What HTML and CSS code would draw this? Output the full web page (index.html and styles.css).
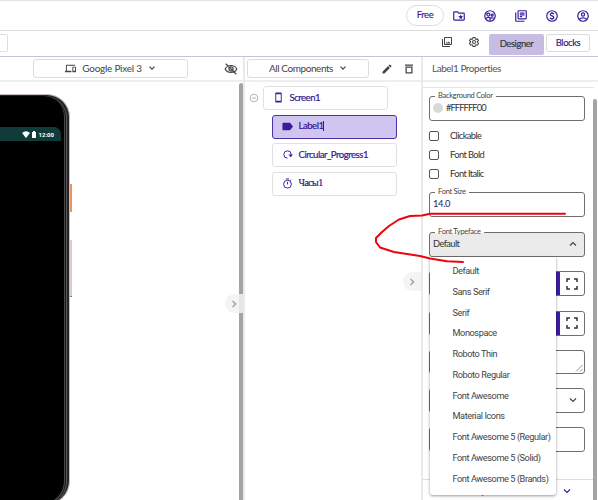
FILE: index.html
```html
<!DOCTYPE html>
<html lang="en">
<head>
<meta charset="utf-8">
<title>Designer</title>
<link rel="stylesheet" href="styles.css">
</head>
<body>
<div class="app">
<header class="topbar">
  <span class="plan">Free</span>
  <svg class="ic" viewBox="0 0 24 24"><path d="M20 6h-8l-2-2H4c-1.100 0-2 .9-2 2v12c0 1.100.9 2 2 2h16c1.100 0 2-.9 2-2V8c0-1.100-.9-2-2-2zm0 12H4V6h5.170l2 2H20v10z"/><path d="M15 9.500l1.200 2.700 2.900.3-2.200 1.900.6 2.900-2.500-1.500-2.500 1.500.6-2.900-2.200-1.900 2.900-.3z"/></svg>
  <svg class="ic" viewBox="0 0 24 24"><circle cx="12" cy="12" r="9" class="ln"/><circle cx="9.200" cy="9.500" r="2.600" class="ln"/><circle cx="15.700" cy="10.500" r="1.700" class="ln"/><path class="ln" d="M4.500 17c2-2.500 5-2.800 7.500-2v6M12 17c1-2 4.500-2.500 6.500-1"/></svg>
  <svg class="ic" viewBox="0 0 24 24"><path d="M4 6H2v14c0 1.100.9 2 2 2h14v-2H4V6zm16-4H8c-1.100 0-2 .9-2 2v12c0 1.100.9 2 2 2h12c1.100 0 2-.9 2-2V4c0-1.100-.9-2-2-2zm0 14H8V4h12v12zM10 9h8v2h-8zm0 3h4v2h-4zm0-6h8v2h-8z"/></svg>
  <svg class="ic" viewBox="0 0 24 24"><circle cx="12" cy="12" r="9" class="ln"/><path class="ln" d="M15 9c-.5-1.400-1.600-1.800-3-1.800-1.600 0-2.900.8-2.900 2.200 0 3.300 6 1.700 6 5 0 1.600-1.400 2.400-3.100 2.400s-3-.7-3.300-2.200M12 5v2.500m0 9V19"/></svg>
  <svg class="ic" viewBox="0 0 24 24"><circle cx="12" cy="12" r="9" class="ln"/><circle cx="12" cy="9.500" r="2.700" class="ln"/><path class="ln" d="M5.500 18c3.500-3.500 9.500-3.500 13 0"/></svg>
</header>
<nav class="modebar">
  <span class="stub"></span>
  <span class="grow"></span>
  <svg class="ic dark sm gallery" viewBox="0 0 24 24"><path d="M20 4v12H8V4h12m0-2H8c-1.100 0-2 .9-2 2v12c0 1.100.9 2 2 2h12c1.100 0 2-.9 2-2V4c0-1.100-.9-2-2-2zm-8.500 9.670l1.690 2.260 2.480-3.100L19 15H9zM2 6v14c0 1.100.9 2 2 2h14v-2H4V6H2z"/></svg>
  <svg class="ic dark sm gear" viewBox="0 0 24 24"><path class="ln" d="M10 3h4l.6 2.700 1.700 1 2.700-.9 2 3.500-2.100 1.800v1.900l2.100 1.800-2 3.500-2.700-.9-1.700 1L14 21h-4l-.6-2.600-1.700-1-2.700.9-2-3.500L5.100 13v-1.900L3 9.300l2-3.500 2.700.9 1.700-1z"/><circle class="ln" cx="12" cy="12" r="3"/></svg>
  <span class="tab on">Designer</span>
  <span class="tab">Blocks</span>
</nav>
<main class="cols">
  <section class="viewer">
    <div class="tools">
      <div class="picker device"><svg class="ic dark mini" viewBox="0 0 24 24"><path d="M4 6h18V4H4c-1.100 0-2 .9-2 2v11H0v3h14v-3H4V6zm19 2h-6c-.55 0-1 .45-1 1v10c0 .55.450 1 1 1h6c.55 0 1-.45 1-1V9c0-.55-.45-1-1-1zm-1 9h-4v-7h4v7z"/></svg><span class="t-device">Google Pixel 3</span><svg class="chev dark" viewBox="0 0 8 8"><path d="M1.500 2.700L4 5.200l2.500-2.500"/></svg></div>
      <svg class="ic dark eye" viewBox="0 0 24 24"><path class="ln" d="M2 12c4-8 16-8 20 0-4 8-16 8-20 0zM3 3l18 18"/><circle class="ln" cx="12" cy="12" r="3.500"/></svg>
    </div>
    <div class="stage">
      <div class="phone"><div class="screen"><div class="status">
        <svg class="wifi" viewBox="0 0 8 7"><path d="M0 2Q4-1.500 8 2L4 7z"/></svg><svg class="batt" viewBox="0 0 4 7"><path d="M0 1h1V0h2v1h1v6H0z"/></svg><span>12:00</span>
      </div></div></div>
      <i class="key power"></i><i class="key volume"></i>
      <i class="bar"></i>
      <span class="pull"><svg class="chev" viewBox="0 0 8 8"><path d="M2.500 1L5.700 4 2.500 7"/></svg></span>
    </div>
  </section>
  <section class="tree">
    <div class="tools">
      <div class="picker all"><span class="t-all">All Components</span><svg class="chev dark" viewBox="0 0 8 8"><path d="M1.500 2.700L4 5.200l2.500-2.500"/></svg></div>
      <svg class="ic dark sm pen" viewBox="0 0 24 24"><path d="M3 17.250V21h3.750L17.810 9.940l-3.750-3.750zM20.710 7.040c.39-.39.390-1.020 0-1.410l-2.340-2.340c-.39-.39-1.020-.39-1.410 0l-1.830 1.830 3.750 3.750z"/></svg>
      <svg class="ic dark sm" viewBox="0 0 24 24"><path fill-rule="evenodd" d="M4 3h16v2.500H4zM5 7h14v14H5zm2.500 2.500v9h9v-9z"/></svg>
    </div>
    <div class="nodes">
      <div class="rootrow"><svg class="fold" viewBox="0 0 10 10"><circle cx="5" cy="5" r="3.800"/><path d="M3 5h4"/></svg>
      <div class="node"><svg class="ic mini" viewBox="0 0 24 24"><path d="M17 1H7c-1.100 0-2 .9-2 2v18c0 1.100.9 2 2 2h10c1.100 0 2-.9 2-2V3c0-1.100-.9-2-2-2zm0 18H7V5h10z"/></svg><span class="t-screen">Screen1</span></div></div>
      <div class="node kid sel"><svg class="ic mini" viewBox="0 0 24 24"><path d="M16.500 4H3C1.500 4 1 5 1 6v12c0 1 .5 2 2 2h13.500c.8 0 1.500-.4 2-1L24 12l-5.500-7c-.5-.6-1.200-1-2-1z"/></svg><span class="t-label">Label1</span><i class="caret"></i></div>
      <div class="node kid"><svg class="ic mini" viewBox="0 0 24 24"><path class="ln" d="M12 20A8 8 0 1 1 20 12v2"/><path d="M14 12h10l-5 6z"/></svg><span class="t-circ">Circular_Progress1</span></div>
      <div class="node kid"><svg class="ic mini" viewBox="0 0 24 24"><circle class="ln" cx="12" cy="13.500" r="8.500"/><path class="ln" d="M8.500 2h7M12 8.500V14m6-8l2-2"/></svg><span class="cyr">Часы1</span></div>
    </div>
    <span class="pull"><svg class="chev" viewBox="0 0 8 8"><path d="M2.500 1L5.700 4 2.500 7"/></svg></span>
  </section>
  <section class="props">
    <div class="tools title"><span class="t-title">Label1 Properties</span></div>
    <div class="form">
      <div class="field first"><span class="cap t-bg">Background Color</span><i class="swatch"></i><span class="t-hex">#FFFFFF00</span></div>
      <div class="checks">
        <div><i></i><span class="t-click">Clickable</span></div>
        <div><i></i><span class="t-bold">Font Bold</span></div>
        <div><i></i><span class="t-italic">Font Italic</span></div>
      </div>
      <div class="field"><span class="cap t-size">Font Size</span><span class="navy">14.0</span></div>
      <div class="field open"><span class="cap t-face">Font Typeface</span><span class="t-def">Default</span><svg class="chev dark" viewBox="0 0 8 8"><path d="M1 5.500l3-3 3 3"/></svg></div>
      <div class="field dim"><i class="block"></i><svg class="full" viewBox="0 0 12 12"><path d="M1 4V1h3M8 1h3v3M11 8v3H8M4 11H1V8"/></svg></div>
      <div class="field dim"><i class="block"></i><svg class="full" viewBox="0 0 12 12"><path d="M1 4V1h3M8 1h3v3M11 8v3H8M4 11H1V8"/></svg></div>
      <div class="field area"><svg class="grip" viewBox="0 0 8 8"><path d="M1 7.500L7.500 1M5 7.500L7.500 5"/></svg></div>
      <div class="field"><svg class="chev dark" viewBox="0 0 8 8"><path d="M1 2.500l3 3 3-3"/></svg></div>
      <div class="field"></div>
      <div class="group"><span>Advanced Properties</span><svg class="chev" viewBox="0 0 8 8"><path d="M1 2.500l3 3 3-3"/></svg></div>
    </div>
    <i class="bar"></i>
    <ul class="menu">
      <li>Default</li><li>Sans Serif</li><li>Serif</li><li>Monospace</li><li>Roboto Thin</li><li>Roboto Regular</li><li>Font Awesome</li><li>Material Icons</li><li>Font Awesome 5 (Regular)</li><li>Font Awesome 5 (Solid)</li><li>Font Awesome 5 (Brands)</li>
    </ul>
  </section>
</main>
<svg class="scribble" viewBox="0 0 598 500"><path d="M565 213.800H430L422 215.500 410 216 399 219.500 389 226 382 232 376 238 376 242 380 247.500 394 252 420 256 430 258.500 447 261.300 463 262"/></svg>
</div>
</body>
</html>
```

FILE: styles.css
```css
* { box-sizing: border-box; }
body { margin: 0; font: 10px/14px Lato, "Liberation Sans", sans-serif; color: #333; background: #fff; }
.app { position: relative; width: 598px; height: 500px; overflow: hidden; display: flex; flex-direction: column; }
svg { display: block; flex: none; }
i { display: block; flex: none; }
span { white-space: nowrap; }
.ic { width: 14px; height: 14px; fill: #3a1c9b; }
.ic .ln { fill: none; stroke: #3a1c9b; stroke-width: 2.100; }
.ic.dark { fill: #444; }
.ic.dark .ln { stroke: #444; }
.ic.sm { width: 12px; height: 12px; }
.ic.mini { width: 11px; height: 11px; }
.chev { width: 8px; height: 8px; fill: none; stroke: #3a1c9b; stroke-width: 1.200; }
.chev.dark { stroke: #444; }
.grow { flex: 1; }

.topbar { height: 31px; flex: none; border-top: 1px solid #e3e3e3; border-bottom: 1px solid #dcdcdc; display: flex; align-items: center; justify-content: flex-end; gap: 17px; padding-right: 8px; }
.plan { width: 38px; height: 21px; border: 1px solid #ddd; border-radius: 11px; text-align: center; line-height: 18px; color: #3a1c9b; margin-right: -9px; font-size: 9.500px; letter-spacing: -.4px; -webkit-text-stroke: .15px #3a1c9b; }
.modebar { height: 26px; flex: none; border-bottom: 1px solid #c9bfe4; display: flex; align-items: flex-start; padding-right: 8px; }
.stub { width: 8px; height: 18px; margin-top: 3px; border: 1px solid #dedede; border-left: 0; border-radius: 0 2px 2px 0; }
.gallery { margin: 5px 15px 0 0; }
.gear { margin: 5px 9px 0 0; }
.tab { width: 44px; height: 18px; margin-top: 3px; border: 1px solid #ddd; border-radius: 2px; text-align: center; color: #32178f; line-height: 16px; font-size: 9.500px; letter-spacing: -.45px; -webkit-text-stroke: .15px #32178f; }
.tab.on { width: 55px; height: 21px; border: 0; background: #c7bde3; color: #333; margin-right: 2px; line-height: 19px; -webkit-text-stroke: .15px #333; }

.cols { flex: 1; display: grid; grid-template-columns: 245px 178px 175px; min-height: 0; }
.cols > section { position: relative; display: flex; flex-direction: column; min-width: 0; }
.tools { height: 25px; flex: none; border-bottom: 2px solid #eee; display: flex; align-items: center; }
.picker { height: 19px; border: 1px solid #ddd; border-radius: 3px; display: flex; align-items: center; justify-content: center; color: #444; gap: 6px; line-height: 17px; padding-bottom: 1px; }
.device { width: 155px; margin-left: 33px; letter-spacing: -.27px; }
.eye { margin-left: 36px; }
.viewer, .tree { border-right: 2px solid #eaeaea; }
.stage { flex: 1; position: relative; overflow: hidden; }
.phone { width: 70px; height: 411px; margin-top: 12px; background: #000; border: 1px solid #c9bcbe; border-left: 0; border-radius: 0 23px 24px 0; box-shadow: inset -2px 1px 0 #242426, inset -3px 1px 0 #58585c, inset -4px 1px 0 #151515, inset -5px 0 0 #48484b; padding-top: 32px; }
.screen { width: 61px; height: 352px; border-radius: 0 7px 8px 0; overflow: hidden; }
.status { height: 14px; background: #113b38; color: #fff; display: flex; align-items: center; justify-content: flex-end; padding-right: 7px; font: bold 6px/8px Roboto, sans-serif; padding-top: 1px; }
.wifi { width: 8px; height: 7px; fill: #fff; margin-right: 2px; }
.batt { width: 4px; height: 7px; fill: #fff; margin-right: 3px; }
.key { position: absolute; left: 70px; }
.power { top: 102px; width: 2px; height: 28px; background: #e9935f; }
.volume { top: 158px; width: 2px; height: 57px; background: #d9cbcb; border-bottom: 1px solid #777; }
.bar { position: absolute; width: 4px; background: #a4a4a4; border-radius: 2px 2px 0 0; }
.stage .bar { top: 1px; bottom: 0; right: 0; }
.pull { position: absolute; display: flex; align-items: center; justify-content: center; width: 18px; height: 19px; border-radius: 10px 0 0 10px; background: rgba(242,242,242,.85); right: 0; }
.pull .chev { stroke: #999; }
.stage .pull { top: 212px; }
.tree > .pull { top: 215px; }

.all { width: 122px; margin-left: 2px; letter-spacing: -.43px; }
.pen { margin: 0 10px 0 12px; }
.nodes { display: flex; flex-direction: column; padding: 4px 0 0 4px; }
.rootrow { display: flex; align-items: center; }
.fold { width: 10px; height: 10px; fill: none; stroke: #b5b5b5; margin-right: 4px; }
.node { width: 125px; height: 24px; border: 1px solid #e0e0e0; border-radius: 3px; display: flex; align-items: center; padding: 0 0 1px 9px; color: #32178f; -webkit-text-stroke: .2px #32178f; font-size: 9.600px; letter-spacing: -.5px; }
.node .mini { margin-right: 5.500px; }
.kid { margin: 4.500px 0 0 23px; }
.sel { background: #d0c4f1; border-color: #4c30a8; }
.caret { width: 1px; height: 10px; background: #32178f; }
.cyr { font: 10px/14px "Liberation Serif", serif; letter-spacing: -.6px; }

.title { padding: 0 0 1px 9px; color: #555; letter-spacing: -.47px; }
.form { margin-right: 4px; padding: 0 9px 0 6px; display: flex; flex-direction: column; height: 418px; overflow: hidden; border-top: 1px solid #e5e5e5; margin-top: 5px; font-size: 9.300px; letter-spacing: -.6px; color: #333; }
.field { position: relative; flex: none; height: 25px; width: 156px; margin-bottom: 14.600px; border: 1px solid #6f6f6f; border-radius: 3px; display: flex; align-items: center; padding: 0 0 1px 3px; }
.first { margin: 8px 0 5px; }
.cap { position: absolute; top: -6px; left: 5px; padding: 0 3px; background: #fff; font-size: 7.500px; line-height: 10px; color: #444; letter-spacing: -.27px; }
.swatch { width: 10px; height: 10px; border-radius: 5px; background: #d9d9d9; margin-right: 3px; }
.t-hex { letter-spacing: -.9px; }
.navy { letter-spacing: -.3px; color: #272050; }
.checks { display: flex; flex-direction: column; margin-bottom: 9px; }
.checks div { display: flex; height: 19px; align-items: center; gap: 11px; }
.checks i { width: 10px; height: 10px; border: 1px solid #555; border-radius: 2px; }
.open { background: #ebebeb; }
.open .cap { background: linear-gradient(#fff 60%, #ebebeb 60%); }
.field > .chev { margin: 0 7px 0 auto; }
.dim { padding: 0; }
.block { width: 4px; height: 23px; background: #3c1d9e; margin-left: 126px; }
.full { width: 12px; height: 12px; fill: none; stroke: #333; stroke-width: 1.500; margin-left: 6px; }
.area { height: 24px; margin-bottom: 13.500px; }
.grip { width: 8px; height: 8px; fill: none; stroke: #777; margin: 12px 1px 0 auto; stroke-width: .8; }
.group { margin: 12px -9px 0 -6px; border-top: 1px solid #ddd; padding: 3px 23px 0 9px; height: 20px; display: flex; align-items: center; justify-content: space-between; flex: none; color: #3a1c9b; }
.props > .bar { top: 42px; bottom: 0; right: 1px; }
.menu { position: absolute; left: 7px; top: 200px; width: 126px; height: 238px; margin: 0; padding: 4px 0 0 22.500px; list-style: none; background: #fff; border-radius: 0 0 3px 3px; box-shadow: 0 1px 3px rgba(0,0,0,.4); font: 9.200px/20.750px Roboto, sans-serif; letter-spacing: -.43px; color: #444; white-space: nowrap; }
.menu li { height: 20.750px; }
.scribble { position: absolute; inset: 0; width: 598px; height: 500px; fill: none; stroke: #e9060c; stroke-width: 2; stroke-linecap: round; stroke-linejoin: round; pointer-events: none; }
```
